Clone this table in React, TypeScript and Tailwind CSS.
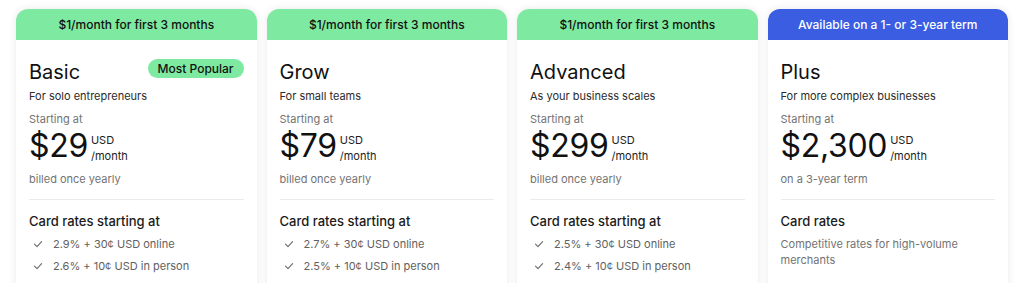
import { Fragment } from 'react';

type Plan = {
  banner: string;
  bannerStyle: string;
  name: string;
  tagline: string;
  price: string;
  billing: string;
  popular?: boolean;
  ratesTitle: string;
  rates?: string[];
  ratesNote?: string;
};

const PLANS: Plan[] = [
  {
    banner: '$1/month for first 3 months',
    bannerStyle: 'bg-[#7ee9a0] text-[#111111]',
    name: 'Basic',
    tagline: 'For solo entrepreneurs',
    price: '$29',
    billing: 'billed once yearly',
    popular: true,
    ratesTitle: 'Card rates starting at',
    rates: ['2.9% + 30¢ USD online', '2.6% + 10¢ USD in person'],
  },
  {
    banner: '$1/month for first 3 months',
    bannerStyle: 'bg-[#7ee9a0] text-[#111111]',
    name: 'Grow',
    tagline: 'For small teams',
    price: '$79',
    billing: 'billed once yearly',
    ratesTitle: 'Card rates starting at',
    rates: ['2.7% + 30¢ USD online', '2.5% + 10¢ USD in person'],
  },
  {
    banner: '$1/month for first 3 months',
    bannerStyle: 'bg-[#7ee9a0] text-[#111111]',
    name: 'Advanced',
    tagline: 'As your business scales',
    price: '$299',
    billing: 'billed once yearly',
    ratesTitle: 'Card rates starting at',
    rates: ['2.5% + 30¢ USD online', '2.4% + 10¢ USD in person'],
  },
  {
    banner: 'Available on a 1- or 3-year term',
    bannerStyle: 'bg-[#3a5de2] text-white',
    name: 'Plus',
    tagline: 'For more complex businesses',
    price: '$2,300',
    billing: 'on a 3-year term',
    ratesTitle: 'Card rates',
    ratesNote: 'Competitive rates for high-volume merchants',
  },
];

function Check() {
  return (
    <svg width="10" height="10" viewBox="0 0 10 10" fill="none" className="shrink-0">
      <path d="M1.5 5.2 L4 7.6 L8.6 2.6" stroke="#6b6b6b" strokeWidth="1.1" strokeLinecap="round" strokeLinejoin="round" />
    </svg>
  );
}

function PlanCard({ plan }: { plan: Plan }) {
  return (
    <div className="rounded-t-xl overflow-hidden bg-white shadow-[0_0_8px_rgba(0,0,0,0.09)]">
      <div className={`h-[31px] flex items-center justify-center text-[12px] font-medium ${plan.bannerStyle}`}>
        {plan.banner}
      </div>
      <div className="px-[13px] pt-[18px] pb-8">
        <div className="flex items-start justify-between">
          <h2 className="text-[20px] leading-[28px] text-[#111111]">{plan.name}</h2>
          {plan.popular && (
            <span className="mt-px h-[19px] px-[10px] rounded-full bg-[#7ee9a0] text-[12px] leading-[19px] font-medium text-[#111111]">
              Most Popular
            </span>
          )}
        </div>
        <p className="mt-[2px] text-[11px] leading-4 text-[#2b2b2b]">{plan.tagline}</p>
        <p className="mt-[7px] text-[11px] leading-4 text-[#737373]">Starting at</p>
        <div className="mt-[3px] flex items-start">
          <span className="text-[32px] leading-[32px] text-[#111111] tracking-[-0.01em]">{plan.price}</span>
          <div className="ml-[3px] mt-[2px] flex flex-col text-[11px] leading-4 text-[#222222]">
            <span>USD</span>
            <span>/month</span>
          </div>
        </div>
        <p className="mt-[7px] text-[11px] leading-4 text-[#737373]">{plan.billing}</p>
        <div className="mt-[12px] h-px bg-[#ebebeb]" />
        <h3 className="mt-[12px] text-[13px] leading-[18px] font-medium text-[#1a1a1a]">{plan.ratesTitle}</h3>
        {plan.rates && (
          <ul className="mt-[6px] flex flex-col gap-[6px]">
            {plan.rates.map((r) => (
              <li key={r} className="flex items-center text-[11px] leading-4 text-[#616161]">
                <span className="ml-[4px] mr-[10px] flex">
                  <Check />
                </span>
                {r}
              </li>
            ))}
          </ul>
        )}
        {plan.ratesNote && (
          <p className="mt-[6px] text-[11px] leading-4 text-[#737373]">{plan.ratesNote}</p>
        )}
      </div>
    </div>
  );
}

export default function App() {
  return (
    <div className="h-[283px] overflow-hidden bg-white px-4 pt-[9px] font-['Inter',sans-serif]">
      <div className="grid grid-cols-4 gap-[10px]">
        {PLANS.map((p) => (
          <Fragment key={p.name}>
            <PlanCard plan={p} />
          </Fragment>
        ))}
      </div>
    </div>
  );
}
